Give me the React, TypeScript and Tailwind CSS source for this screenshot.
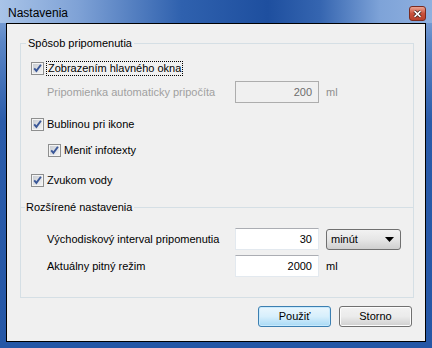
const FONT = { fontFamily: '"Liberation Sans", Arial, sans-serif' };

function CheckBox() {
  return (
    <svg width="13" height="13" viewBox="0 0 13 13" className="shrink-0">
      <defs>
        <linearGradient id="cbg" x1="0" y1="0" x2="1" y2="1">
          <stop offset="0" stopColor="#c9cdd3" />
          <stop offset="1" stopColor="#f3f3f3" />
        </linearGradient>
      </defs>
      <rect x="0.5" y="0.5" width="12" height="12" fill="#f4f4f4" stroke="#8e8f8f" />
      <rect x="2" y="2" width="9" height="9" fill="url(#cbg)" />
      <path d="M3.2 6.4 L5.4 8.9 L9.9 2.8" fill="none" stroke="#3b5898" strokeWidth="1.9" />
    </svg>
  );
}

function TextBox({ value, disabled }: { value: string; disabled?: boolean }) {
  return (
    <div
      className={
        disabled
          ? "flex h-[22px] w-[84px] items-center justify-end border border-[#adadad] bg-[#f0f0f0] pr-[6px] text-[#6d6d6d]"
          : "flex h-[22px] w-[84px] items-center justify-end border border-[#e3e9ef] border-t-[#abadb3] bg-white pr-[6px] text-black"
      }
    >
      {value}
    </div>
  );
}

export default function App() {
  return (
    <div
      className="flex h-[348px] w-[432px] flex-col bg-[linear-gradient(to_bottom,#8fb0df_0%,#5b86c6_12%,#2a5ba9_35%,#2557a6_100%)] text-[11px] leading-[13px]"
      style={FONT}
    >
      {/* Title bar */}
      <div className="flex h-[23px] items-start justify-between bg-[linear-gradient(to_right,#a9c4e8_0%,#7fa2d6_18%,#2f61ae_42%,#1e4f9f_62%,#3565b0_74%,#7ea3d8_88%,#8fb0df_100%)] pl-[8px] pr-[6px]">
        <span className="mt-[6px] text-[12px] leading-[14px] text-black">Nastavenia</span>
        <div className="mt-[6px] flex h-[15px] w-[17px] items-center justify-center rounded-[3px] border border-[#7a2b20] bg-gradient-to-b from-[#eaa494] via-[#c9523c] to-[#b8402b]">
          <svg width="9" height="8" viewBox="0 0 9 8">
            <path d="M1.5 1.2 L7.5 6.8 M7.5 1.2 L1.5 6.8" stroke="#3a1a14" strokeWidth="3.2" />
            <path d="M1.5 1.2 L7.5 6.8 M7.5 1.2 L1.5 6.8" stroke="#ffffff" strokeWidth="1.6" />
          </svg>
        </div>
      </div>

      {/* Client area */}
      <div className="mx-[6px] mb-[6px] flex flex-1 flex-col border border-black bg-[#f0f0f0]">
        <fieldset className="ml-[13px] mr-[11px] mt-[13px] border border-[#d5dfe5] pb-[20px]">
          <legend className="ml-[5px] px-[2px] leading-[13px] text-black">Spôsob pripomenutia</legend>

          <div className="mt-[8px] flex h-[20px] items-center pl-[10px]">
            <CheckBox />
            <span className="ml-[2px] border border-dotted border-black px-[1px] leading-[13px]">
              Zobrazením hlavného okna
            </span>
          </div>

          <div className="mt-[3px] flex h-[22px] items-center pl-[26px]">
            <span className="w-[188px] text-[#a0a0a0]">Pripomienka automaticky pripočíta</span>
            <TextBox value="200" disabled />
            <span className="ml-[7px] text-[#8e8e8e]">ml</span>
          </div>

          <div className="mt-[11px] flex h-[20px] items-center gap-[3px] pl-[10px]">
            <CheckBox />
            <span>Bublinou pri ikone</span>
          </div>

          <div className="mt-[6px] flex h-[20px] items-center gap-[3px] pl-[27px]">
            <CheckBox />
            <span>Meniť infotexty</span>
          </div>

          <div className="mt-[10px] flex h-[20px] items-center gap-[3px] pl-[10px]">
            <CheckBox />
            <span>Zvukom vody</span>
          </div>

          {/* second section header */}
          <div className="mt-[10px] flex h-[14px] items-center">
            <div className="h-px w-[4px] bg-[#d5dfe5]" />
            <span className="px-[1px]">Rozšírené nastavenia</span>
            <div className="ml-[1px] h-px flex-1 bg-[#d5dfe5]" />
          </div>

          <div className="mt-[14px] flex h-[22px] items-center pl-[26px]">
            <span className="w-[188px]">Východiskový interval pripomenutia</span>
            <TextBox value="30" />
            <div className="ml-[7px] flex h-[21px] w-[75px] items-center justify-between rounded-[3px] border border-[#707070] bg-gradient-to-b from-[#f2f2f2] via-[#e6e6e6] to-[#cfcfcf] pl-[4px] pr-[6px]">
              <span>minút</span>
              <svg width="9" height="5" viewBox="0 0 9 5">
                <path d="M0 0 H9 L4.5 5 Z" fill="#000" />
              </svg>
            </div>
          </div>

          <div className="mt-[5px] flex h-[22px] items-center pl-[26px]">
            <span className="w-[188px]">Aktuálny pitný režim</span>
            <TextBox value="2000" />
            <span className="ml-[7px]">ml</span>
          </div>
        </fieldset>

        <div className="mr-[13px] mt-[8px] flex justify-end gap-[8px]">
          <button className="flex h-[21px] w-[73px] items-center justify-center rounded-[3px] border border-[#3c7fb1] bg-gradient-to-b from-[#eaf6fd] via-[#d7effc] to-[#a7d9f5] text-black shadow-[inset_0_0_0_1px_#c8eafd]">
            Použiť
          </button>
          <button className="flex h-[21px] w-[73px] items-center justify-center rounded-[3px] border border-[#707070] bg-gradient-to-b from-[#f2f2f2] via-[#ebebeb] to-[#cfcfcf] text-black shadow-[inset_0_0_0_1px_#fcfcfc]">
            Storno
          </button>
        </div>
      </div>
    </div>
  );
}
